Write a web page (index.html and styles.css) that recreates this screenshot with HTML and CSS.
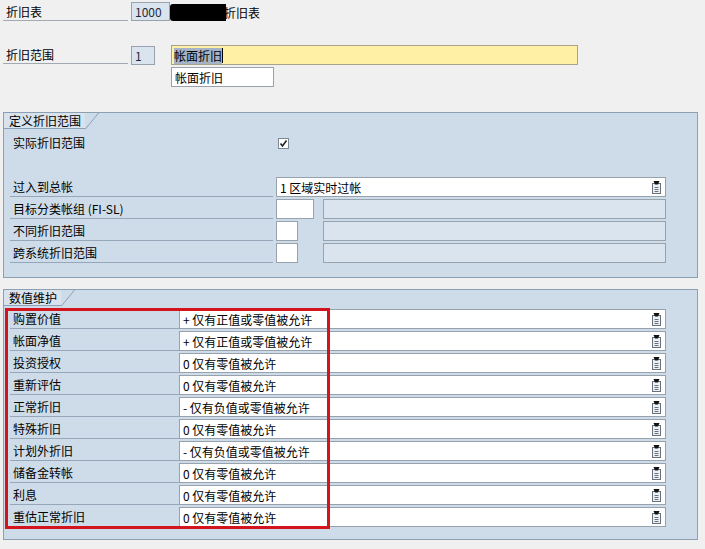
FILE: index.html
```html
<!DOCTYPE html>
<html lang="zh-CN">
<head>
  <meta charset="UTF-8" />
  <title>折旧范围</title>
  <link rel="stylesheet" href="styles.css">
</head>
<body>

  <!-- value-help icon used in every dropdown -->
  <svg class="defs" width="0" height="0">
    <symbol id="pick" viewBox="0 0 9 13">
      <rect x="0.5" y="2.5" width="8" height="10" fill="#eef1f4" stroke="#66717c"/>
      <path d="M1.5 0h6l-1.5 3.5h-3z" fill="#111"/>
      <path d="M2.5 6.5h4M2.5 8.5h4M2.5 10.5h4" stroke="#66717c"/>
    </symbol>
  </svg>

  <!-- Header fields -->
  <div class="head">
    <div class="hrow r-table">
      <span class="hlabel">折旧表</span>
      <span class="field key w-table">1000</span>
      <span class="redact"></span>
      <span class="htext">折旧表</span>
    </div>
    <div class="hrow r-area">
      <span class="hlabel">折旧范围</span>
      <span class="field key w-area">1</span>
      <span class="field focus"><span class="sel">帐面折旧</span><span class="caret"></span></span>
    </div>
    <div class="hrow r-sub">
      <span class="field plain w-short">帐面折旧</span>
    </div>
  </div>

  <!-- Define depreciation area -->
  <section class="group g-define">
    <div class="tab"><span>定义折旧范围</span><svg class="slant" width="14" height="17"><path d="M0 16.5L13.5 0" stroke="#8aa0b6"/></svg></div>
    <div class="rows">
      <div class="frow r-check">
        <span class="flabel bare">实际折旧范围</span>
        <span class="check">
          <svg width="9" height="9" viewBox="0 0 9 9"><path d="M1.5 4.5l2 2.5 4-5.5" fill="none" stroke="#222" stroke-width="1.6"/></svg>
        </span>
      </div>
      <div class="frow r-post">
        <span class="flabel">过入到总帐</span>
        <span class="field drop w-post">1 区域实时过帐<svg class="ico"><use href="#pick"/></svg></span>
      </div>
      <div class="frow">
        <span class="flabel">目标分类帐组 (FI-SL)</span>
        <span class="slot"><span class="field plain w-ledger"></span></span>
        <span class="field off"></span>
      </div>
      <div class="frow">
        <span class="flabel">不同折旧范围</span>
        <span class="slot"><span class="field plain w-mini"></span></span>
        <span class="field off"></span>
      </div>
      <div class="frow">
        <span class="flabel">跨系统折旧范围</span>
        <span class="slot"><span class="field plain w-mini"></span></span>
        <span class="field off"></span>
      </div>
    </div>
  </section>

  <!-- Value maintenance -->
  <section class="group g-values">
    <div class="tab"><span>数值维护</span><svg class="slant" width="14" height="17"><path d="M0 16.5L13.5 0" stroke="#8aa0b6"/></svg></div>
    <div class="rows">
      <div class="vrow"><span class="vlabel">购置价值</span><span class="field drop w-val">+ 仅有正值或零值被允许<svg class="ico"><use href="#pick"/></svg></span></div>
      <div class="vrow"><span class="vlabel">帐面净值</span><span class="field drop w-val">+ 仅有正值或零值被允许<svg class="ico"><use href="#pick"/></svg></span></div>
      <div class="vrow"><span class="vlabel">投资授权</span><span class="field drop w-val">0 仅有零值被允许<svg class="ico"><use href="#pick"/></svg></span></div>
      <div class="vrow"><span class="vlabel">重新评估</span><span class="field drop w-val">0 仅有零值被允许<svg class="ico"><use href="#pick"/></svg></span></div>
      <div class="vrow"><span class="vlabel">正常折旧</span><span class="field drop w-val">- 仅有负值或零值被允许<svg class="ico"><use href="#pick"/></svg></span></div>
      <div class="vrow"><span class="vlabel">特殊折旧</span><span class="field drop w-val">0 仅有零值被允许<svg class="ico"><use href="#pick"/></svg></span></div>
      <div class="vrow"><span class="vlabel">计划外折旧</span><span class="field drop w-val">- 仅有负值或零值被允许<svg class="ico"><use href="#pick"/></svg></span></div>
      <div class="vrow"><span class="vlabel">储备金转帐</span><span class="field drop w-val">0 仅有零值被允许<svg class="ico"><use href="#pick"/></svg></span></div>
      <div class="vrow"><span class="vlabel">利息</span><span class="field drop w-val">0 仅有零值被允许<svg class="ico"><use href="#pick"/></svg></span></div>
      <div class="vrow"><span class="vlabel">重估正常折旧</span><span class="field drop w-val">0 仅有零值被允许<svg class="ico"><use href="#pick"/></svg></span></div>
    </div>
    <div class="mark"></div>
  </section>

</body>
</html>
```

FILE: styles.css
```css
* {
  box-sizing: border-box;
}

body {
  margin: 0;
  background-color: #f0f0f0;
  color: #000;
  font-family: "Noto Sans CJK SC", "Liberation Sans", sans-serif;
  font-size: 12px;
  line-height: 18px;
}

.defs {
  position: absolute;
}

/* ---------- header ---------- */

.head {
  padding: 2px 0 0 3px;
}

.hrow {
  display: flex;
  align-items: flex-start;
}

.r-table {
  height: 19px;
}

.r-area {
  height: 20px;
  margin-top: 24px;
}

.r-sub {
  height: 20px;
  margin-top: 2px;
  padding-left: 168px;
}

.hlabel {
  width: 125px;
  height: 19px;
  padding: 1px 0 0 3px;
  border-bottom: 1px solid #a3a9b0;
  margin-right: 3px;
}

.field {
  display: flex;
  align-items: center;
  height: 19px;
  padding: 1px 0 0 3px;
  border: 1px solid #98a2ac;
  white-space: nowrap;
}

.key {
  background-color: #dae4ee;
  color: #1c2a38;
}

.w-table {
  width: 39px;
}

.w-area {
  width: 24px;
  margin-top: 1px;
}

.redact {
  width: 56px;
  height: 17px;
  margin-top: 2px;
  background-color: #000;
  border-radius: 3px 0 0 3px;
}

.htext {
  margin-left: -2px;
  padding-top: 2px;
}

.focus {
  width: 407px;
  height: 20px;
  margin-left: 16px;
  padding-left: 2px;
  background-color: #fff0a6;
  border-color: #a8a48c;
}

.sel {
  background-color: #a4b4c6;
  line-height: 16px;
}

.caret {
  width: 1px;
  height: 15px;
  background-color: #000;
}

.plain {
  background-color: #fff;
  height: 20px;
}

.w-short {
  width: 103px;
}

/* ---------- group boxes ---------- */

.group {
  position: relative;
  width: 695px;
  margin-left: 3px;
  background-color: #cedcea;
  border: 1px solid #8ca0b4;
}

.g-define {
  margin-top: 25px;
}

.g-values {
  margin-top: 11px;
}

.tab {
  display: flex;
  align-items: flex-end;
  height: 16px;
}

.tab span {
  height: 16px;
  padding: 0 4px 0 5px;
  line-height: 16px;
  background-color: #d9e3ed;
  border-bottom: 1px solid #8aa0b6;
}

.slant {
  display: block;
  margin-bottom: -1px;
}

.rows {
  display: flex;
  flex-direction: column;
  gap: 2px;
  padding-left: 6px;
}

.g-define .rows {
  padding-top: 4px;
  padding-bottom: 14px;
}

.g-values .rows {
  padding-top: 3px;
  padding-bottom: 12px;
}

.frow,
.vrow {
  display: flex;
  height: 20px;
}

.r-post {
  margin-top: 22px;
}

.flabel {
  width: 263px;
  margin-right: 3px;
  padding: 1px 0 0 3px;
  border-bottom: 1px solid #95a7b9;
}

.flabel.bare {
  border-bottom: none;
}

.check {
  display: flex;
  align-items: center;
  justify-content: center;
  width: 11px;
  height: 11px;
  margin: 5px 0 0 2px;
  padding: 0;
  background-color: #fff;
  border: 1px solid #7d8894;
}

.slot {
  width: 47px;
}

.w-ledger {
  width: 38px;
}

.w-mini {
  width: 22px;
}

.off {
  width: 343px;
  height: 20px;
  background-color: #d9e4ef;
  border-color: #97a3af;
}

.drop {
  justify-content: space-between;
  height: 20px;
  padding-right: 4px;
  background-color: #fff;
}

.w-post {
  width: 390px;
}

.ico {
  width: 9px;
  height: 13px;
  margin-top: -1px;
}

.vlabel {
  width: 169px;
  padding: 1px 0 0 3px;
  border-bottom: 1px solid #95a7b9;
}

.w-val {
  width: 487px;
}

/* red highlight frame over the value rows */
.mark {
  position: absolute;
  left: 1px;
  top: 18px;
  width: 325px;
  height: 221px;
  border: 3px solid #d3141c;
}
```
